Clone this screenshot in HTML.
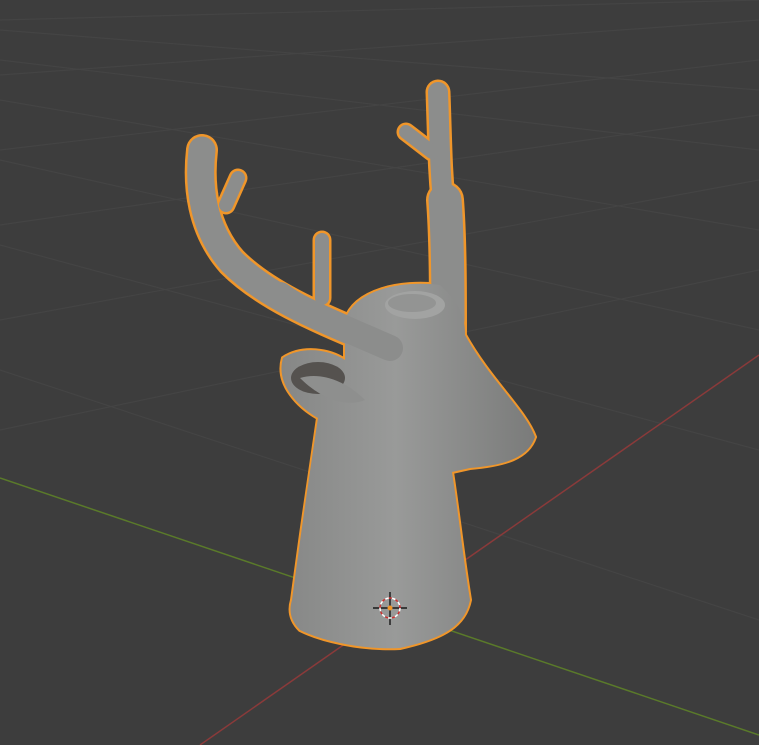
<!DOCTYPE html>
<html><head><style>
html,body{margin:0;padding:0;background:#3d3d3d;width:759px;height:745px;overflow:hidden}
</style></head><body>
<svg width="759" height="745" viewBox="0 0 759 745" xmlns="http://www.w3.org/2000/svg">
<defs>
<linearGradient id="g" x1="0" y1="0" x2="1" y2="0">
<stop offset="0" stop-color="#868786"/><stop offset="0.45" stop-color="#999a99"/><stop offset="1" stop-color="#7a7b7a"/>
</linearGradient>
</defs>
<rect width="759" height="745" fill="#3d3d3d"/>
<g stroke="#444" stroke-width="1.2" fill="none">
<line x1="0" y1="20" x2="759" y2="0"/>
<line x1="0" y1="75" x2="759" y2="20"/>
<line x1="0" y1="150" x2="759" y2="60"/>
<line x1="0" y1="225" x2="759" y2="115"/>
<line x1="0" y1="320" x2="759" y2="180"/>
<line x1="0" y1="430" x2="759" y2="270"/>
<line x1="0" y1="30" x2="759" y2="90"/>
<line x1="0" y1="60" x2="759" y2="150"/>
<line x1="0" y1="100" x2="759" y2="230"/>
<line x1="0" y1="160" x2="759" y2="330"/>
<line x1="0" y1="245" x2="759" y2="450"/>
<line x1="0" y1="370" x2="759" y2="620"/>
</g>
<line x1="200" y1="745" x2="759" y2="355" stroke="#8a3a3a" stroke-width="1.5"/>
<line x1="0" y1="478" x2="759" y2="735" stroke="#5a7a2a" stroke-width="1.5"/>
<g fill="none" stroke-linecap="round" stroke="#f0962a">
<path d="M390,348 C330,322 270,300 232,262 C202,228 198,185 202,150" stroke-width="32"/>
<path d="M226,205 L238,178" stroke-width="19"/>
<path d="M322,298 L322,240" stroke-width="19"/>
<path d="M438,92 C440,150 440,170 443,200" stroke-width="25"/>
<path d="M445,200 C448,240 448,290 448,330" stroke-width="38"/>
<path d="M432,152 L406,132" stroke-width="19"/>
</g>
<path d="M292,600 C300,540 310,470 318,418 C300,408 275,385 283,358 C303,345 330,350 345,360 L345,320 C355,290 400,280 440,285 C462,305 465,320 465,335 C490,380 525,410 535,437 C528,458 505,465 470,468 L452,472 C458,510 462,550 470,600 C465,625 445,638 400,648 C360,650 320,640 300,630 C290,620 289,610 292,600 Z" fill="#f0962a" stroke="#f0962a" stroke-width="4"/>
<g fill="none" stroke-linecap="round" stroke="#8c8d8c">
<path d="M390,348 C330,322 270,300 232,262 C202,228 198,185 202,150" stroke-width="27"/>
<path d="M226,205 L238,178" stroke-width="14"/>
<path d="M322,298 L322,240" stroke-width="14"/>
<path d="M438,92 C440,150 440,170 443,200" stroke-width="20"/>
<path d="M445,200 C448,240 448,290 448,320" stroke-width="33"/>
<path d="M432,152 L406,132" stroke-width="14"/>
</g>
<path d="M292,600 C300,540 310,470 318,418 C300,408 275,385 283,358 C303,345 330,350 345,360 L345,320 C355,290 400,280 440,285 C462,305 465,320 465,335 C490,380 525,410 535,437 C528,458 505,465 470,468 L452,472 C458,510 462,550 470,600 C465,625 445,638 400,648 C360,650 320,640 300,630 C290,620 289,610 292,600 Z" fill="url(#g)"/>
<ellipse cx="415" cy="305" rx="30" ry="14" fill="#a2a3a2"/>
<ellipse cx="412" cy="303" rx="24" ry="9" fill="#939493"/>
<ellipse cx="318" cy="378" rx="27" ry="16" fill="#55524f"/>
<path d="M300,378 C320,372 345,380 365,400 C345,408 320,398 300,378 Z" fill="#8e8f8e"/>
<path d="M390,348 C330,322 300,310 280,295" fill="none" stroke="#8c8d8c" stroke-width="26" stroke-linecap="round"/>
<g stroke="#000" stroke-width="1.2">
<line x1="390" y1="592" x2="390" y2="625"/><line x1="373" y1="608" x2="407" y2="608"/>
</g>
<circle cx="390" cy="608" r="10" fill="none" stroke="#fff" stroke-width="1.5" stroke-dasharray="4 3"/>
<circle cx="390" cy="608" r="10" fill="none" stroke="#d03030" stroke-width="1.5" stroke-dasharray="3 4" stroke-dashoffset="3.5"/>
<circle cx="390" cy="608" r="2.5" fill="#f0962a"/>
</svg>
</body></html>
